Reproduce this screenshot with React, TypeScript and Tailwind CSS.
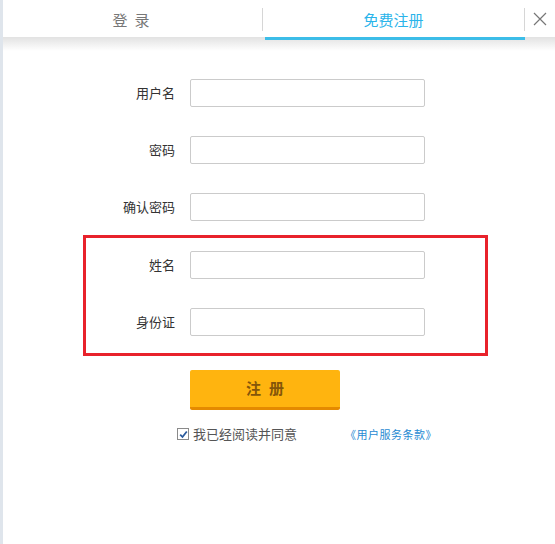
import React from "react";

const font = { fontFamily: '"Noto Sans CJK SC", "Liberation Sans", sans-serif' };

const Row: React.FC<{ label: string; labelW: string; type?: string }> = ({ label, labelW, type = "text" }) => (
  <div className="flex items-center h-[28px]">
    <label className={`${labelW} text-right text-[13px] text-[#333]`}>{label}</label>
    <input
      type={type}
      className="ml-[15px] w-[235px] h-[28px] border border-[#cbcbcb] rounded-[2px] bg-white outline-none px-2 text-[13px]"
    />
  </div>
);

const App: React.FC = () => {
  return (
    <div className="w-[555px] h-[544px] bg-white border-l-[3px] border-[#dfe5ec] overflow-hidden" style={font}>
      {/* header tabs */}
      <div className="flex h-[37px] -ml-[3px]">
        <div className="w-[262px] flex items-center justify-center pt-[3px] text-[15px] text-[#777] tracking-[7px] pl-[7px]">
          登录
        </div>
        <div className="w-px h-[23px] mt-[8px] bg-[#d6d6d6]" />
        <div className="w-[261px] flex items-center justify-center pt-[3px] text-[15px] text-[#2ab4ea]">
          免费注册
        </div>
        <div className="w-px h-[23px] mt-[8px] bg-[#d6d6d6]" />
        <button className="flex-1 flex items-center justify-center text-[#777]">
          <svg width="14" height="14" viewBox="0 0 14 14" stroke="currentColor" strokeWidth="1.2" fill="none">
            <path d="M1 1 L13 13 M13 1 L1 13" />
          </svg>
        </button>
      </div>
      <div className="h-[14px] -ml-[3px] bg-gradient-to-b from-[#e2e2e2] to-white">
        <div className="ml-[265px] w-[260px] h-[3px] bg-[#3cbde8]" />
      </div>

      {/* form */}
      <div className="mt-[28px] -ml-[3px] flex flex-col gap-[29px]">
        <Row label="用户名" labelW="w-[175px]" />
        <Row label="密码" labelW="w-[175px]" type="password" />
        <Row label="确认密码" labelW="w-[175px]" type="password" />
      </div>

      <div className="mt-[14px] ml-[80px] w-[405px] border-[3px] border-[#e8222b] pt-[13px] pb-[17px] flex flex-col gap-[29px]">
        <Row label="姓名" labelW="w-[89px]" />
        <Row label="身份证" labelW="w-[89px]" />
      </div>

      <div className="-ml-[3px] pl-[190px] mt-[14px]">
        <button className="w-[150px] h-[40px] bg-[#ffb40f] border-b-[3px] border-[#e48a00] rounded-[2px] text-[15px] font-semibold text-[#84560a] tracking-[8px] pl-[8px]">
          注册
        </button>
      </div>

      <div className="-ml-[3px] pl-[177px] mt-[16px] flex items-center h-[16px]">
        <span className="w-[12px] h-[12px] border border-[#8a8a8a] bg-white flex items-center justify-center">
          <svg width="9" height="9" viewBox="0 0 9 9" fill="none" stroke="#2a5a9c" strokeWidth="1.8">
            <path d="M1.2 4.6 L3.5 7 L7.8 1.5" />
          </svg>
        </span>
        <span className="ml-[4px] text-[13px] text-[#555]">我已经阅读并同意</span>
        <a className="ml-[48px] text-[11px] tracking-[0.5px] text-[#1f8ad2] cursor-pointer">《用户服务条款》</a>
      </div>
    </div>
  );
};

export default App;
